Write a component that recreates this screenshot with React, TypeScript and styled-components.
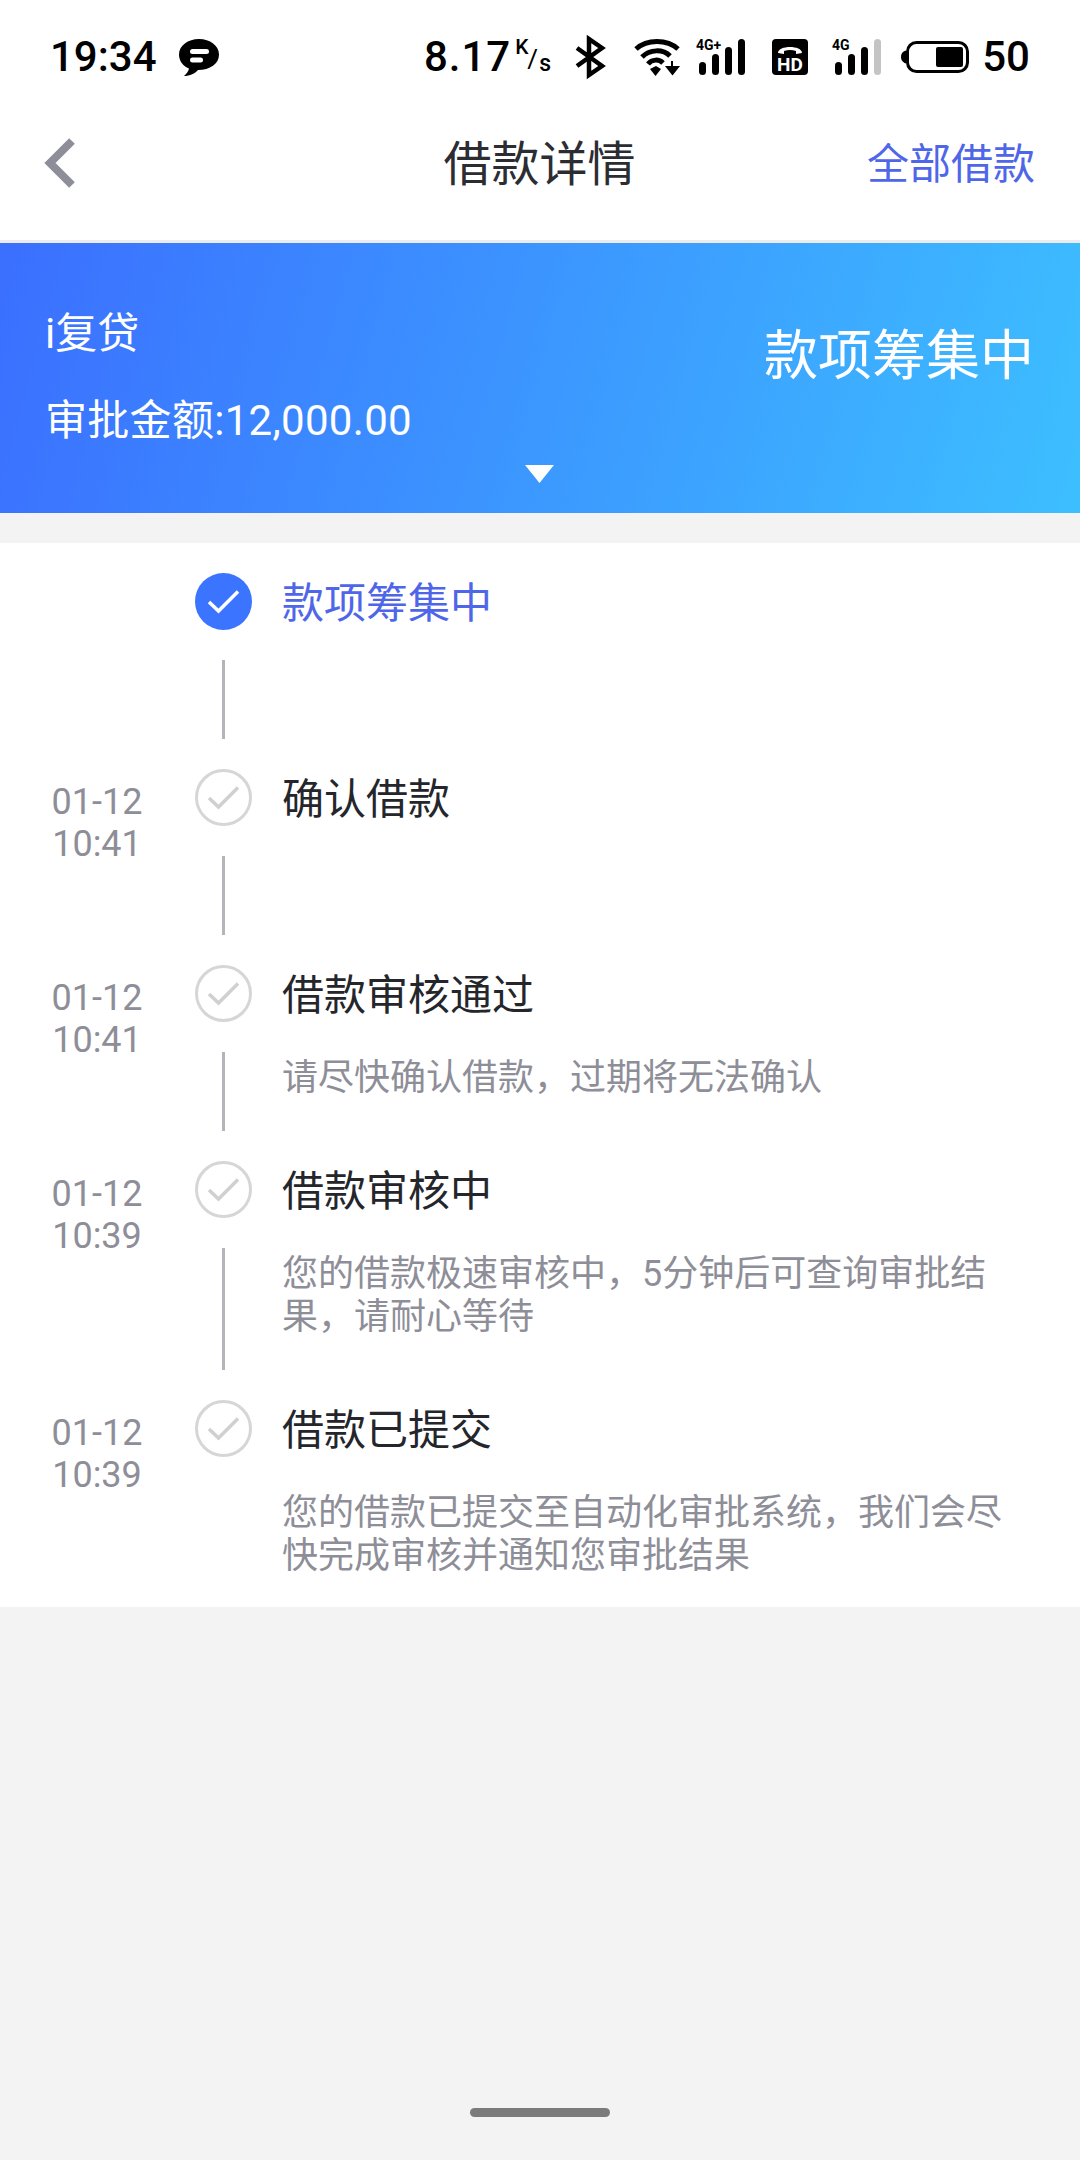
import React from "react";
import styled, { createGlobalStyle } from "styled-components";

const Global = createGlobalStyle`
  html, body { margin: 0; padding: 0; background: #f3f3f3; }
  * { box-sizing: border-box; }
`;
const Page = styled.div`
  width: 1080px; height: 2160px; display: flex; flex-direction: column; background: #f3f3f3;
  font-family: Roboto, "Noto Sans CJK SC", sans-serif; overflow: hidden;
`;
const StatusBar = styled.div`
  height: 96px; padding: 18px 50px 0 50px; background: #fff; display: flex; align-items: center; justify-content: space-between;
  color: #000; font-size: 42px; font-weight: 500;
`;
const StatusGroup = styled.div`display: flex; align-items: center;`;
const Time = styled.span`margin-right: 22px; line-height: 44px;`;
const Speed = styled.span<{ $spaced?: boolean }>`line-height: 44px; letter-spacing: ${p => (p.$spaced ? 1 : 0)}px;`;
const Unit = styled.span`
  position: relative; width: 38px; height: 44px; margin: 0 22px 0 4px; flex: none; font-weight: 500;
`;
const UnitK = styled.span`position: absolute; left: 0; top: 0; font-size: 21px; line-height: 24px;`;
const UnitSlash = styled.span`position: absolute; left: 12px; top: 9px; font-size: 26px; font-weight: 400; line-height: 30px;`;
const UnitS = styled.span`position: absolute; left: 24px; top: 16px; font-size: 23px; line-height: 26px;`;
const Icon = styled.svg<{ $mr?: number }>`display: block; flex: none; overflow: visible; margin-right: ${p => p.$mr ?? 0}px;`;
const Nav = styled.div`
  height: 144px; padding: 0 45px 10px 43px; background: #fff; display: grid; grid-template-columns: 1fr auto 1fr; align-items: center;
`;
const Title = styled.div`font-size: 48px; color: #2b2d33; line-height: 60px; padding: 4px 0 0 1px;`;
const NavLink = styled.div`font-size: 42px; color: #4f66e8; justify-self: end; line-height: 60px; padding-top: 4px;`;
const Divider = styled.div`height: 3px; background: #ececec;`;
const Banner = styled.div`
  height: 270px; padding: 0 46px 0 45px; background: linear-gradient(105deg, #3b6fff 0%, #3c9dff 58%, #3dbfff 100%);
  display: flex; justify-content: space-between; color: #fff; position: relative;
`;
const BannerLeft = styled.div`display: flex; flex-direction: column; padding-top: 66px;`;
const Product = styled.div`font-size: 42px; line-height: 50px;`;
const Amount = styled.div`font-size: 42px; line-height: 52px; margin-top: 36px; letter-spacing: 0.3px;`;
const BannerStatus = styled.div`font-size: 54px; line-height: 70px; margin-top: 79px;`;
const Caret = styled.svg`position: absolute; left: 525px; top: 222px;`;
const Card = styled.div`margin-top: 30px; background: #fff; padding-top: 30px; display: flex; flex-direction: column;`;
const Row = styled.div`display: grid; grid-template-columns: 195px 57px 1fr; min-height: 196px;`;
const TimeCol = styled.div`
  font-size: 36px; line-height: 42px; color: #8e8e98; padding-top: 12px; text-align: center; padding-right: 1px;
`;
const Rail = styled.div`display: flex; flex-direction: column; align-items: center;`;
const RailLine = styled.div`flex: 1; width: 3px; background: #b4b4ba; margin: 30px 0;`;
const Body = styled.div<{ $last?: boolean }>`padding: 2px 70px ${p => (p.$last ? 29 : 61)}px 30px;`;
const StepTitle = styled.div<{ $active?: boolean }>`
  font-size: 42px; line-height: 57px; color: ${p => (p.$active ? "#4f66e8" : "#24262b")};
`;
const Desc = styled.div`font-size: 36px; line-height: 43px; margin-top: 33px; color: #8e8e98;`;
const Spacer = styled.div`flex: 1;`;
const HomeBar = styled.div`width: 140px; height: 9px; border-radius: 4.5px; background: #7b7b7b; margin: 0 auto 43px;`;
const CheckIcon = styled.svg`display: block; flex: none;`;
const BackIcon = styled.svg`display: block;`;

const Check = ({ active }: { active?: boolean }) => (
  <CheckIcon width="57" height="57" viewBox="0 0 57 57">
    <circle cx="28.5" cy="28.5" r={active ? 28.5 : 27} fill={active ? "#3b74ff" : "#fff"} stroke={active ? "none" : "#d6d6d6"} strokeWidth="3" />
    <path d="M14 29 L23.500 38 L43 18.500" fill="none" stroke={active ? "#fff" : "#d0d0d0"} strokeWidth="3.500" />
  </CheckIcon>
);

const Bars = ({ dim }: { dim?: boolean }) => (
  <g>
    <rect x="3" y="23" width="7" height="13" rx="3.5" fill="#000" />
    <rect x="16" y="15" width="7" height="21" rx="3.5" fill="#000" />
    <rect x="29" y="8" width="7" height="28" rx="3.5" fill="#000" />
    <rect x="42" y="0" width="7" height="36" rx="3.5" fill={dim ? "#c4c4c4" : "#000"} />
  </g>
);

const steps = [
  { time: null, title: "款项筹集中", active: true },
  { time: ["01-12", "10:41"], title: "确认借款" },
  { time: ["01-12", "10:41"], title: "借款审核通过", desc: "请尽快确认借款，过期将无法确认" },
  { time: ["01-12", "10:39"], title: "借款审核中", desc: "您的借款极速审核中，5分钟后可查询审批结果，请耐心等待" },
  { time: ["01-12", "10:39"], title: "借款已提交", desc: "您的借款已提交至自动化审批系统，我们会尽快完成审核并通知您审批结果" },
];

export default function App() {
  return (
    <Page>
      <Global />
      <StatusBar>
        <StatusGroup>
          <Time>19:34</Time>
          <Icon width="40" height="37" viewBox="0 0 40 37">
            <path d="M20 0C9 0 0 6.500 0 15.500C0 22 4 27 10 29.500C9.500 32 7.500 35 5 37C11 37 16 34.500 19 31C31 31 40 25 40 15.500C40 6.500 31 0 20 0Z" fill="#000" />
            <rect x="11" y="10" width="19" height="5" rx="2.500" fill="#fff" />
            <rect x="11" y="18.500" width="13" height="5" rx="2.500" fill="#fff" />
          </Icon>
        </StatusGroup>
        <StatusGroup>
          <Speed $spaced>8.17</Speed>
          <Unit><UnitK>K</UnitK><UnitSlash>/</UnitSlash><UnitS>s</UnitS></Unit>
          <Icon width="30" height="38" viewBox="0 0 30 38" $mr={29}>
            <path d="M2 10 L27 28 L14 37 V1 L27 10 L2 28" fill="none" stroke="#000" strokeWidth="4.500" />
          </Icon>
          <Icon width="46" height="38" viewBox="0 0 46 38" $mr={16}>
            <path d="M2 11C13 1 33 1 44 11" fill="none" stroke="#000" strokeWidth="5" />
            <path d="M8 19C16 11 29 11 36 18" fill="none" stroke="#000" strokeWidth="5" />
            <path d="M14 26C18 21 25 21 29 25" fill="none" stroke="#000" strokeWidth="5" />
            <path d="M16 31L22 28L27 31L21.500 38Z" fill="#000" />
            <path d="M38 23V31M33 29H44L38.500 36Z" fill="#000" stroke="#000" strokeWidth="2" />
          </Icon>
          <Icon width="52" height="44" viewBox="0 -4 52 44" $mr={24}>
            <Bars />
            <text x="0" y="11" fontFamily="Roboto" fontWeight="700" fontSize="14" fill="#000">4G+</text>
          </Icon>
          <Icon width="36" height="36" viewBox="0 0 36 36" $mr={24}>
            <rect width="36" height="36" rx="4" fill="#000" />
            <path d="M6 14C6 6 30 6 30 14L24 15V12C20 10.500 16 10.500 12 12V15Z" fill="#fff" />
            <text x="18" y="32" textAnchor="middle" fontFamily="Roboto" fontWeight="700" fontSize="19" fill="#fff">HD</text>
          </Icon>
          <Icon width="50" height="44" viewBox="0 -4 50 44" $mr={19}>
            <Bars dim />
            <text x="0" y="11" fontFamily="Roboto" fontWeight="700" fontSize="14" fill="#000">4G</text>
          </Icon>
          <Icon width="68" height="32" viewBox="0 0 68 32" $mr={13}>
            <path d="M4 11 C0 13 0 19 4 21Z" fill="#000" stroke="#000" strokeWidth="2" />
            <rect x="6.500" y="1.500" width="60" height="29" rx="9" fill="none" stroke="#000" strokeWidth="3" />
            <rect x="35" y="6" width="27" height="20" rx="2" fill="#000" />
          </Icon>
          <Speed>50</Speed>
        </StatusGroup>
      </StatusBar>
      <Nav>
        <BackIcon width="34" height="52" viewBox="0 0 34 52">
          <path d="M29 4 L7 26 L29 48" fill="none" stroke="#8e8e9a" strokeWidth="8" />
        </BackIcon>
        <Title>借款详情</Title>
        <NavLink>全部借款</NavLink>
      </Nav>
      <Divider />
      <Banner>
        <BannerLeft>
          <Product>i复贷</Product>
          <Amount>审批金额:12,000.00</Amount>
        </BannerLeft>
        <BannerStatus>款项筹集中</BannerStatus>
        <Caret width="29" height="18" viewBox="0 0 29 18">
          <path d="M0 0H29L14.500 18Z" fill="#fff" />
        </Caret>
      </Banner>
      <Card>
        {steps.map((s, i) => (
          <Row key={s.title}>
            <TimeCol>
              {s.time && s.time.map(t => <div key={t}>{t}</div>)}
            </TimeCol>
            <Rail>
              <Check active={s.active} />
              {i < steps.length - 1 && <RailLine />}
            </Rail>
            <Body $last={i === steps.length - 1}>
              <StepTitle $active={s.active}>{s.title}</StepTitle>
              {s.desc && <Desc>{s.desc}</Desc>}
            </Body>
          </Row>
        ))}
      </Card>
      <Spacer />
      <HomeBar />
    </Page>
  );
}
